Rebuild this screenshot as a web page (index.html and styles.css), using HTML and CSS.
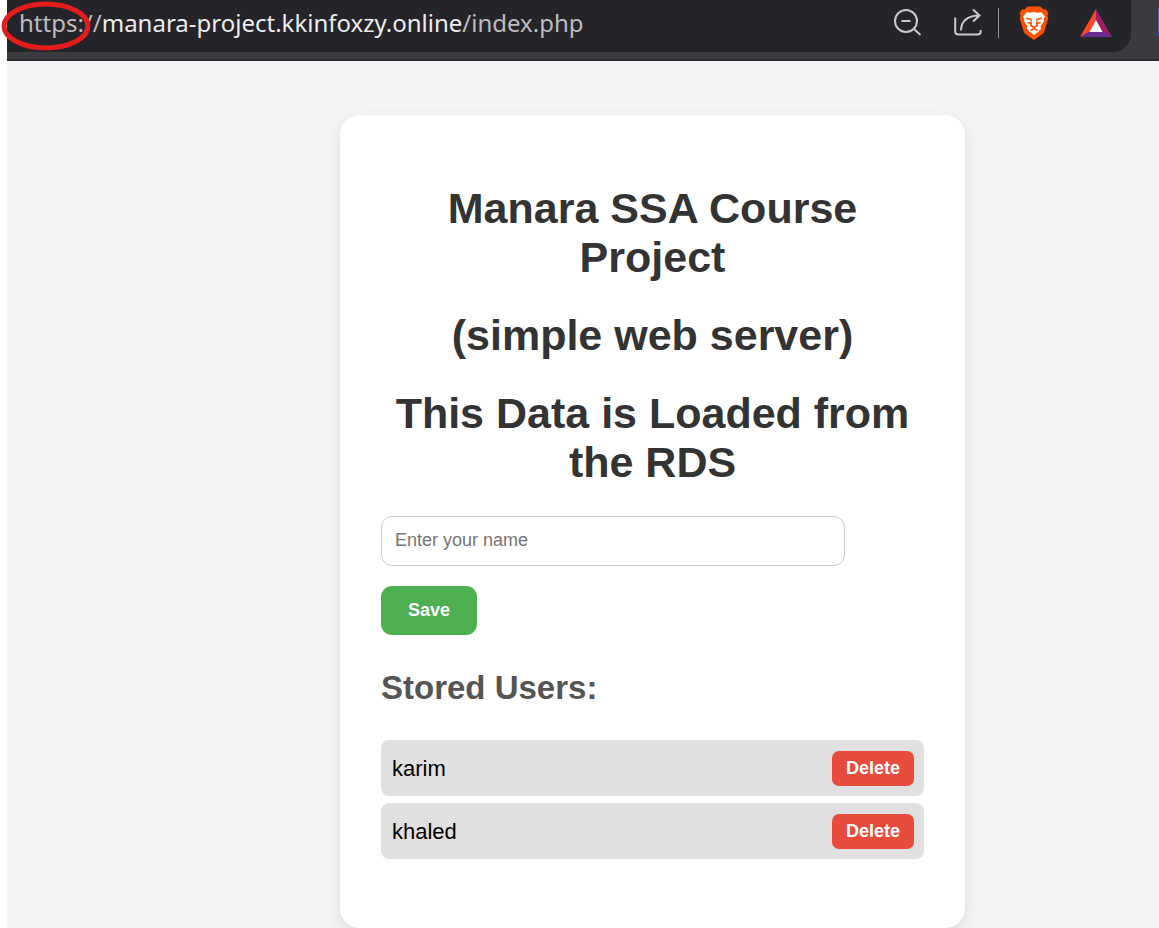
FILE: index.html
```html
<!DOCTYPE html>
<html lang="en">
<head>
<meta charset="utf-8">
<title>Manara SSA Course Project</title>
<link rel="stylesheet" href="styles.css">
</head>
<body>
<div class="window">
  <header class="toolbar">
    <div class="address">
      <span class="url"><span class="scheme">https:</span><span class="dim">//</span>manara-project.kkinfoxzy.online<span class="dim">/index.php</span></span>
      <svg class="mark" viewBox="0 0 94 52" aria-hidden="true"><ellipse cx="47" cy="26" rx="42" ry="22"/></svg>
      <div class="actions">
        <button class="icon" aria-label="Zoom">
          <svg viewBox="0 0 32 32" class="line"><circle cx="16" cy="14" r="11"/><path d="M11.500 14h9M24 22l6.500 6"/></svg>
        </button>
        <button class="icon" aria-label="Share">
          <svg viewBox="0 0 32 32" class="line"><path d="M3.200 10.500v14q0 3 3 3h19.500q3 0 3-3v-1.500M9 23.500c0-8.500 6-15 18-15M21 2.500l6.500 6-6.500 6"/></svg>
        </button>
        <span class="divider"></span>
        <button class="icon" aria-label="Brave Shields">
          <svg viewBox="0 0 32 36"><path fill="#ff5000" d="M9.500 1.500h13l3 3 2.500-.3 2.500 4-1 2.300.7 3-3.700 12.500q-.5 2-2 3L16 35l-8.500-6q-1.500-1-2-3L1.800 13.500l.7-3-1-2.300 2.500-4 2.500.3z"/><path fill="#fff" d="M9 7l3.500.8L16 7l3.500.8L23 7l4 4.500-1.300 2.500.3 2-3.500 5.500.5 2.500-2.500 2.500L16 30l-4.500-3.500L9 24l.5-2.500L6 16l.3-2L5 11.500z"/><path fill="none" stroke="#ff5000" stroke-width="1.600" stroke-linejoin="round" d="M8 13.200l5 1v2.300M24 13.200l-5 1v2.300M13.500 17l-.8 3.500 3.300 2 3.300-2-.8-3.500M9.500 17.500l3 .8M22.500 17.500l-3 .8M12.500 25.500l3.500-2 3.500 2"/></svg>
        </button>
        <button class="icon" aria-label="Rewards">
          <svg viewBox="0 0 32 30"><path fill="#ff4724" d="M16 1v12L10 24 0 29z"/><path fill="#9e1f63" d="M16 1v12l6 11 10 5z"/><path fill="#662d91" d="M0 29l10-6h12l10 6z"/><path fill="#fff" d="M16 12l6.500 12h-13z"/></svg>
        </button>
      </div>
    </div>
    <span class="edge"></span>
  </header>
  <main class="page">
    <section class="card">
      <h1>Manara SSA Course Project</h1>
      <h1>(simple web server)</h1>
      <h1>This Data is Loaded from the RDS</h1>
      <form class="form">
        <input class="field" type="text" placeholder="Enter your name" aria-label="Enter your name">
        <button class="save" type="button">Save</button>
      </form>
      <h2>Stored Users:</h2>
      <ul class="users">
        <li class="user">karim <button class="delete" type="button">Delete</button></li>
        <li class="user">khaled <button class="delete" type="button">Delete</button></li>
      </ul>
    </section>
  </main>
</div>
</body>
</html>
```
FILE: styles.css
```css
* { box-sizing: border-box; }
body {
  margin: 0;
  background: #fff;
  font-family: "Liberation Sans", Arial, sans-serif;
}
.window {
  display: flex;
  flex-direction: column;
  height: 100vh;
  padding-left: 7px;
  overflow: hidden;
}
.toolbar {
  display: flex;
  justify-content: space-between;
  flex: none;
  padding-bottom: 7px;
  background: #3b3a3f;
  border-bottom: 2px solid #2d2c31;
}
.address {
  position: relative;
  display: flex;
  flex: 1;
  align-items: center;
  justify-content: space-between;
  height: 52px;
  margin-right: 27px;
  padding: 0 19px 6px 12px;
  background: #252429;
  border-radius: 0 0 18px 0;
}
.url {
  color: #ececee;
  font: 24px/32px "Noto Sans", sans-serif;
  white-space: nowrap;
}
.scheme, .dim { color: #bdbcc0; }
.mark {
  position: absolute;
  left: -8px;
  top: 0;
  width: 94px;
  height: 52px;
  fill: none;
  stroke: #e51c1c;
  stroke-width: 5;
}
.actions { display: flex; align-items: center; }
.icon {
  display: flex;
  width: 32px;
  padding: 0;
  border: 0;
  background: none;
}
.icon + .icon { margin-left: 30px; }
.icon svg { width: 32px; }
.line {
  fill: none;
  stroke: #c9c8cc;
  stroke-width: 2;
}
.divider {
  width: 1px;
  height: 30px;
  margin: 0 19px 0 14px;
  background: #919095;
}
.edge {
  width: 1px;
  height: 28px;
  margin-top: 8px;
  background: #1667e8;
}
.page {
  display: flex;
  flex: 1 0 auto;
  align-items: flex-start;
  justify-content: center;
  padding: 54px 0 0 139px;
  background: #f4f4f4;
}
.card {
  flex: 0 1 625px;
  padding: 69px 41px 69px;
  background: #fff;
  border-radius: 20px;
  box-shadow: 0 5px 14px rgba(0, 0, 0, 0.1);
}
h1 {
  margin: 0 0 29px;
  color: #333;
  font-size: 43px;
  line-height: 49px;
  text-align: center;
}
h2 {
  margin: 33px 0;
  color: #555;
  font-size: 33px;
  line-height: 39px;
}
.form {
  display: flex;
  flex-direction: column;
  align-items: flex-start;
  gap: 20px;
}
.field {
  width: 464px;
  max-width: 100%;
  height: 50px;
  padding: 0 13px 2px;
  border: 1px solid #ccc;
  border-radius: 11px;
  font: 18px "Liberation Sans", Arial, sans-serif;
}
.field::placeholder { color: #757575; }
.save, .delete {
  border: 0;
  color: #fff;
  font: bold 18px/21px "Liberation Sans", Arial, sans-serif;
}
.save {
  padding: 14px 27px;
  background: #4caf50;
  border-radius: 11px;
}
.users {
  display: grid;
  gap: 7px;
  margin: 0;
  padding: 0;
  list-style: none;
}
.user {
  display: flex;
  align-items: center;
  justify-content: space-between;
  padding: 11px 10px 10px 11px;
  background: #e0e0e0;
  border-radius: 8px;
  font-size: 22px;
}
.delete {
  padding: 7px 14px;
  background: #e74c3c;
  border-radius: 7px;
}
```
